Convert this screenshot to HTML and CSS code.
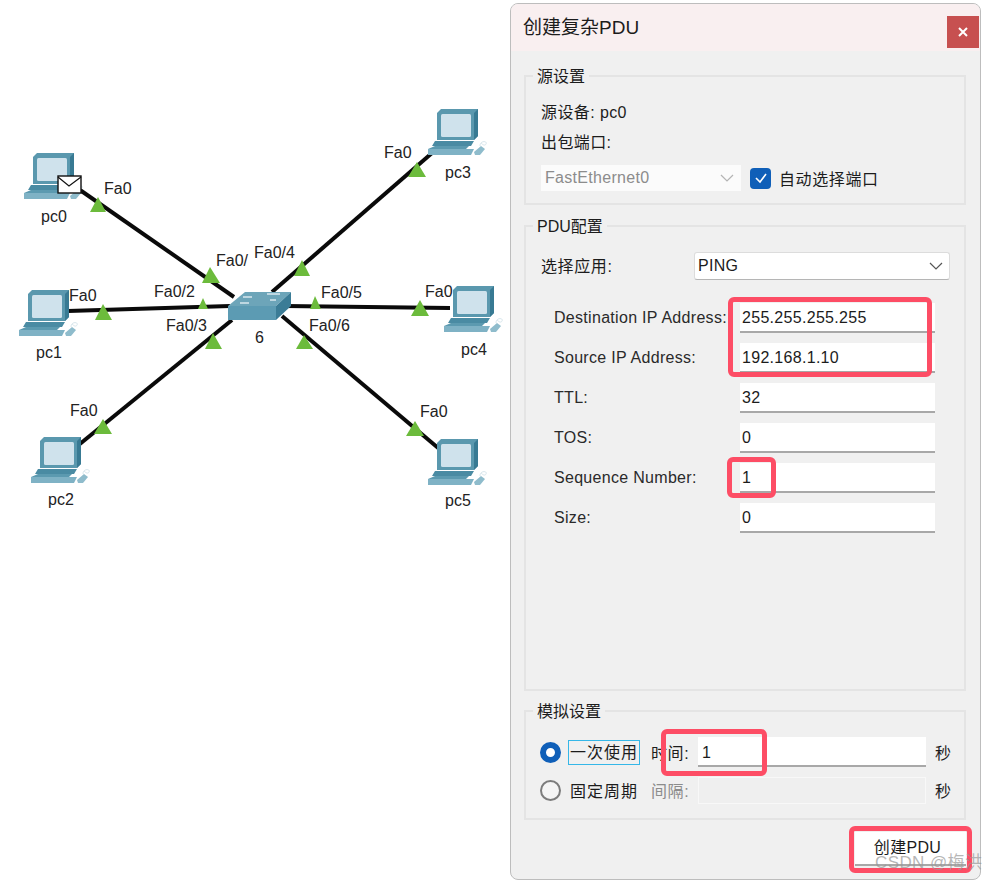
FILE: index.html
```html
<!DOCTYPE html>
<html lang="zh">
<head>
<meta charset="utf-8">
<title>创建复杂PDU</title>
<link rel="stylesheet" href="styles.css">
</head>
<body>
<div class="page">
  <section class="canvas">
    <svg class="topology" width="510" height="881" viewBox="0 0 510 881">
      <defs>
        <symbol id="pc" viewBox="0 0 60 50">
          <path d="M9 5 L13 1 L50 1 L50 28 L46 32 L9 32 Z" fill="#5a98ae"/>
          <path d="M46 5 L50 1 L50 28 L46 32 Z" fill="#387a93"/>
          <rect x="13" y="6" width="30" height="23" rx="1.5" fill="#cfe2ec"/>
          <path d="M7 33 L46 33 L43 38 L4 38 Z" fill="#4a8ba3"/>
          <path d="M7 38 L41 38 L38 41 L0 41 Z" fill="#5c9ab0"/>
          <path d="M0 41 L46 41 L43 47 L0 47 Z" fill="#7fb2c5"/>
          <path d="M46 44 L53 38 L57 41 L52 47 L47 47 Z" fill="#8fbccc"/>
          <path d="M52 38 C52 32 60 33 58 36 C57 38 55 37 53 35" fill="none" stroke="#d8e6ec" stroke-width="1"/>
        </symbol>
      </defs>
      <g class="links">
        <line x1="80" y1="190" x2="234" y2="297"/>
        <line x1="68" y1="311" x2="230" y2="306"/>
        <line x1="70" y1="452" x2="232" y2="320"/>
        <line x1="432" y1="153" x2="272" y2="292"/>
        <line x1="285" y1="306" x2="450" y2="308"/>
        <line x1="282" y1="316" x2="450" y2="458"/>
      </g>
      <use href="#pc" x="24" y="152" width="60" height="50"/>
      <use href="#pc" x="19" y="289" width="60" height="50"/>
      <use href="#pc" x="31" y="436" width="60" height="50"/>
      <use href="#pc" x="428" y="108" width="60" height="50"/>
      <use href="#pc" x="444" y="285" width="60" height="50"/>
      <use href="#pc" x="428" y="438" width="60" height="50"/>
      <g class="ports">
        <path d="M98 197 L106 212 L90 212 Z"/>
        <path d="M210 267 L220 283 L202 283 Z"/>
        <path d="M103 304 L112 320 L95 320 Z"/>
        <path d="M203 298 L208 309 L198 309 Z"/>
        <path d="M213 333 L222 349 L205 349 Z"/>
        <path d="M103 419 L112 434 L94 434 Z"/>
        <path d="M302 260 L310 276 L294 276 Z"/>
        <path d="M315 296 L321 309 L310 309 Z"/>
        <path d="M420 300 L429 316 L411 316 Z"/>
        <path d="M304 335 L313 349 L296 349 Z"/>
        <path d="M415 421 L424 436 L406 436 Z"/>
        <path d="M417 162 L426 177 L408 177 Z"/>
      </g>
      <path d="M228 306 L245 292 L291 292 L276 306 Z" fill="#6da5b9"/>
      <path d="M228 306 L276 306 L276 320 L228 320 Z" fill="#5c9bb3"/>
      <path d="M276 306 L291 292 L291 306 L276 320 Z" fill="#3b7c96"/>
      <path d="M243 297 H252 M267 294 H280 M240 303 H249 M270 300 H276" stroke="#d9e8ee" stroke-width="1.4"/>
      <rect x="58" y="176" width="23" height="17" fill="#fff" stroke="#111" stroke-width="1.4"/>
      <path d="M58 177 L69 186 L81 177" fill="none" stroke="#111" stroke-width="1.2"/>
    </svg>
    <span class="tag t1">Fa0</span>
    <span class="tag t2">Fa0/</span>
    <span class="tag t3">Fa0/4</span>
    <span class="tag t4">Fa0</span>
    <span class="tag t5">Fa0/2</span>
    <span class="tag t6">Fa0/3</span>
    <span class="tag t7">Fa0</span>
    <span class="tag t8">Fa0</span>
    <span class="tag t9">Fa0/5</span>
    <span class="tag t10">Fa0</span>
    <span class="tag t11">Fa0/6</span>
    <span class="tag t12">Fa0</span>
    <span class="tag n0">pc0</span>
    <span class="tag n1">pc1</span>
    <span class="tag n2">pc2</span>
    <span class="tag n3">pc3</span>
    <span class="tag n4">pc4</span>
    <span class="tag n5">pc5</span>
    <span class="tag n6">6</span>
  </section>

  <section class="dialog">
    <header class="titlebar">
      <h1 class="title">创建复杂PDU</h1>
      <div class="close"><svg width="10" height="10" viewBox="0 0 10 10"><path d="M1 1 L9 9 M9 1 L1 9" stroke="#fff" stroke-width="2"/></svg></div>
    </header>
    <div class="body">
      <fieldset class="group g-source">
        <legend>源设置</legend>
        <div class="line">源设备: pc0</div>
        <div class="line">出包端口:</div>
        <div class="port-row">
          <div class="combo disabled"><span>FastEthernet0</span>
            <svg width="14" height="8" viewBox="0 0 14 8"><path d="M1 1 L7 7 L13 1" fill="none" stroke="#b4b4b4" stroke-width="1.2"/></svg>
          </div>
          <div class="check"><svg width="14" height="12" viewBox="0 0 14 12"><path d="M2 6 L6 10 L12 2" fill="none" stroke="#fff" stroke-width="1.6"/></svg></div>
          <span class="check-label">自动选择端口</span>
        </div>
      </fieldset>

      <fieldset class="group g-pdu">
        <legend>PDU配置</legend>
        <div class="app-row">
          <span class="app-label">选择应用:</span>
          <div class="combo app"><span>PING</span>
            <svg width="14" height="8" viewBox="0 0 14 8"><path d="M1 1 L7 7 L13 1" fill="none" stroke="#555" stroke-width="1.2"/></svg>
          </div>
        </div>
        <div class="form">
          <label class="f-label">Destination IP Address:</label><div class="input">255.255.255.255</div>
          <label class="f-label">Source IP Address:</label><div class="input">192.168.1.10</div>
          <label class="f-label">TTL:</label><div class="input">32</div>
          <label class="f-label">TOS:</label><div class="input">0</div>
          <label class="f-label">Sequence Number:</label><div class="input">1</div>
          <label class="f-label">Size:</label><div class="input">0</div>
        </div>
      </fieldset>

      <fieldset class="group g-sim">
        <legend>模拟设置</legend>
        <div class="sim-row">
          <span class="radio on"></span>
          <span class="focus">一次使用</span>
          <span class="sim-label">时间:</span>
          <div class="input sim-input">1</div>
          <span class="unit">秒</span>
        </div>
        <div class="sim-row second">
          <span class="radio"></span>
          <span class="plain">固定周期</span>
          <span class="sim-label muted">间隔:</span>
          <div class="input sim-input off"></div>
          <span class="unit">秒</span>
        </div>
      </fieldset>

      <div class="actions"><div class="button">创建PDU</div></div>
    </div>
    <div class="mark m1"></div>
    <div class="mark m2"></div>
    <div class="mark m3"></div>
    <div class="mark m4"></div>
  </section>
  <span class="watermark">CSDN @梅洪</span>
</div>
</body>
</html>
```

FILE: styles.css
```css
* { box-sizing: border-box; }
html, body { margin: 0; padding: 0; background: #fff; }
body {
  font-family: "Liberation Sans", "Noto Sans CJK SC", sans-serif;
  font-size: 16px;
  color: #1c1c1c;
}
.page {
  position: relative;
  display: flex;
  width: 987px;
  height: 881px;
  overflow: hidden;
}

/* network diagram */
.canvas { position: relative; flex: 0 0 510px; height: 881px; }
.topology { display: block; }
.links line { stroke: #0a0a0a; stroke-width: 4; }
.ports path { fill: #6cbb3c; }
.tag { position: absolute; font-size: 16px; line-height: 18px; color: #222; white-space: nowrap; }
.t1 { left: 104px; top: 180px; }
.t2 { left: 216px; top: 252px; }
.t3 { left: 254px; top: 244px; }
.t4 { left: 384px; top: 144px; }
.t5 { left: 154px; top: 283px; }
.t6 { left: 166px; top: 317px; }
.t7 { left: 69px; top: 287px; }
.t8 { left: 70px; top: 402px; }
.t9 { left: 321px; top: 284px; }
.t10 { left: 425px; top: 283px; }
.t11 { left: 309px; top: 317px; }
.t12 { left: 420px; top: 403px; }
.n0 { left: 41px; top: 208px; }
.n1 { left: 36px; top: 344px; }
.n2 { left: 48px; top: 491px; }
.n3 { left: 445px; top: 164px; }
.n4 { left: 461px; top: 341px; }
.n5 { left: 445px; top: 492px; }
.n6 { left: 255px; top: 329px; }

/* dialog */
.dialog {
  position: relative;
  flex: 0 0 471px;
  min-width: 0;
  height: 877px;
  margin-top: 3px;
  background: #f0f0f0;
  border: 1.5px solid #bdbdbd;
  border-radius: 8px;
}
.titlebar {
  display: flex;
  align-items: center;
  justify-content: space-between;
  height: 47px;
  padding: 0 1px 0 12px;
  background: #f9eff0;
  border-radius: 7px 7px 0 0;
}
.title { margin: 0; font-size: 19px; font-weight: 400; line-height: 47px; }
.close {
  display: flex;
  align-items: center;
  justify-content: center;
  width: 32px;
  height: 32px;
  margin-top: 8px;
  background: #c75050;
}
.body { padding: 0 14px 0 13px; }
.group {
  display: block;
  margin: 0;
  padding: 0 15px;
  min-width: 0;
  border: 2px solid #e4e4e4;
}
.group legend {
  margin-left: -8px;
  padding: 0 4px;
  font-size: 16px;
  line-height: 20px;
  position: relative;
  top: 1px;
}
.g-source { height: 139px; margin-top: 15px; }
.g-pdu { height: 475px; margin-top: 11px; }
.g-sim { height: 119px; margin-top: 10px; }

.line { height: 30px; line-height: 30px; letter-spacing: .4px; }
.g-source .line:first-of-type { margin-top: 12px; }
.port-row { display: flex; align-items: center; margin-top: 7px; }
.combo {
  display: flex;
  align-items: center;
  justify-content: space-between;
  height: 26px;
  padding: 0 6px 0 4px;
  background: #fff;
}
.combo.disabled { width: 200px; background: #fbfbfb; color: #8c8c8c; padding-right: 7px; letter-spacing: .3px; }
.check {
  display: flex;
  align-items: center;
  justify-content: center;
  width: 21px;
  height: 21px;
  margin-left: 9px;
  border-radius: 4px;
  background: #0f5fb8;
}
.check-label { margin-left: 8px; letter-spacing: .6px; }

.app-row { display: flex; align-items: center; margin-top: 16px; }
.app-label { flex: none; width: 153px; margin-top: -3px; letter-spacing: .6px; }
.combo.app {
  flex: none;
  width: 256px;
  height: 28px;
  padding: 0 6px 0 3px;
  border: 1px solid #dcdcdc;
  border-bottom-color: #b5b5b5;
  border-radius: 3px;
  letter-spacing: .3px;
}
.form {
  display: grid;
  grid-template-columns: 186px 195px;
  grid-auto-rows: 30px;
  row-gap: 10px;
  margin: 23px 0 0 13px;
  align-items: center;
}
.f-label { color: #2a2a2a; letter-spacing: .3px; white-space: nowrap; }
.input {
  height: 30px;
  line-height: 29px;
  padding-left: 2px;
  background: #fff;
  border-bottom: 2px solid #a8a8a8;
  letter-spacing: .3px;
}

.sim-row { display: flex; align-items: center; height: 30px; margin-top: 16px; }
.sim-row.second { margin-top: 8px; }
.radio {
  flex: none;
  width: 21px;
  height: 21px;
  margin-left: -1px;
  border: 2px solid #7c7c7c;
  border-radius: 50%;
  background: #f4f4f4;
}
.radio.on { border: 6px solid #0f5fb8; background: #fff; }
.focus {
  flex: none;
  width: 72px;
  height: 25px;
  margin-left: 7px;
  border: 1px solid #35b7e8;
  line-height: 23px;
  text-align: center;
  letter-spacing: 1px;
  white-space: nowrap;
}
.plain { flex: none; width: 72px; margin-left: 7px; text-align: center; letter-spacing: 1px; white-space: nowrap; }
.sim-label { flex: none; width: 47px; margin-left: 11px; letter-spacing: .6px; white-space: nowrap; }
.sim-label.muted { color: #8c8c8c; }
.sim-input { flex: none; width: 228px; padding-left: 4px; line-height: 31px; }
.sim-input.off { height: 27px; background: #efefef; border: 1px solid #f8f8f8; }
.unit { flex: none; margin-left: 9px; }
.actions { display: flex; justify-content: flex-end; margin-top: 12px; }
.button {
  width: 111px;
  height: 34px;
  line-height: 32px;
  padding-right: 6px;
  text-align: center;
  background: #fff;
  border-bottom: 2px solid #a8a8a8;
  letter-spacing: .3px;
}

/* annotation rectangles */
.mark {
  position: absolute;
  border: 5px solid #fd4d65;
  border-radius: 6px;
}
.m1 { left: 216.5px; top: 292.5px; width: 204px; height: 80px; }
.m2 { left: 215.5px; top: 452.5px; width: 49px; height: 41px; }
.m3 { left: 149.5px; top: 724.5px; width: 106px; height: 47px; }
.m4 { left: 337.5px; top: 821.5px; width: 123px; height: 47px; }

.watermark {
  position: absolute;
  left: 875px;
  top: 855px;
  font-size: 17px;
  line-height: 16px;
  color: rgba(150, 150, 150, .7);
  letter-spacing: .4px;
  white-space: nowrap;
}
```
